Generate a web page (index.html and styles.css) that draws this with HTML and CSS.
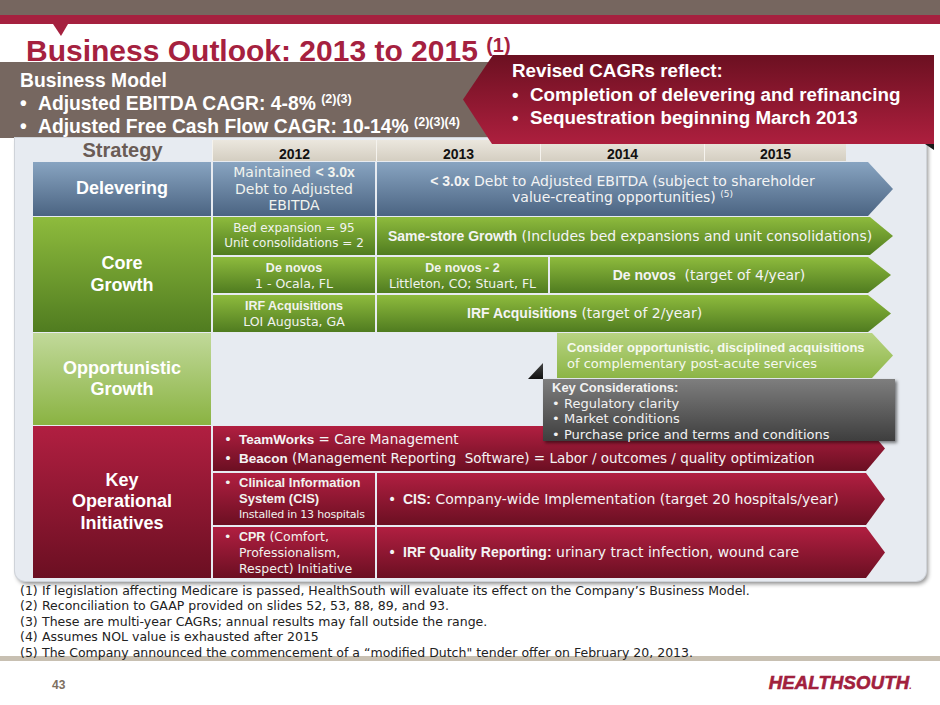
FILE: index.html
```html
<!DOCTYPE html>
<html>
<head>
<meta charset="utf-8">
<title>Business Outlook: 2013 to 2015</title>
<link rel="stylesheet" href="styles.css">
</head>
<body>
<div class="slide">
  <div class="topbar"></div>
  <div class="redline"></div>
  <h1 class="title">Business Outlook: 2013 to 2015 <span class="tsup">(1)</span></h1>

  <div class="banner">
    <div class="model">
      <div>Business Model</div>
      <div class="mli"><span class="dot">•</span><span>Adjusted EBITDA CAGR: 4-8% <sup>(2)(3)</sup></span></div>
      <div class="mli"><span class="dot">•</span><span>Adjusted Free Cash Flow CAGR: 10-14% <sup>(2)(3)(4)</sup></span></div>
    </div>
    <div class="revised">
      <div class="rev-shape">
        <div>Revised CAGRs reflect:</div>
        <div class="mli"><span class="dot">•</span><span>Completion of delevering and refinancing</span></div>
        <div class="mli"><span class="dot">•</span><span>Sequestration beginning March 2013</span></div>
      </div>
      <div class="rev-shadow"></div>
    </div>
  </div>

  <div class="panel">
    <div class="hdr">
      <div class="strategy">Strategy</div>
      <div class="yr y1">2012</div>
      <div class="yr y1">2013</div>
      <div class="yr y1">2014</div>
      <div class="yr y4">2015</div>
    </div>

    <div class="sect s-delev">
      <div class="label blue">Delevering</div>
      <div class="cell blue t14 lh165"><span>Maintained <b>&lt; 3.0x</b><br>Debt to Adjusted<br>EBITDA</span></div>
      <div class="arrow blue w516 h25 center t14 lh16"><span><b>&lt; 3.0x</b> Debt to Adjusted EBITDA (subject to shareholder<br>value-creating opportunities) <sup>(5)</sup></span></div>
    </div>

    <div class="sect s-core">
      <div class="label green">Core<br>Growth</div>
      <div class="rows">
        <div class="sub ra">
          <div class="cell green t12"><span>Bed expansion = 95<br>Unit consolidations = 2</span></div>
          <div class="arrow green w516 h23 t14 pl11"><span><b>Same-store Growth</b> (Includes bed expansions and unit consolidations)</span></div>
        </div>
        <div class="sub rb">
          <div class="cell green t125"><span><b>De novos</b><br>1 - Ocala, FL</span></div>
          <div class="cell green wide t125"><span><b>De novos - 2</b><br>Littleton, CO; Stuart, FL</span></div>
          <div class="arrow green w341 h23 center t14"><span><b>De novos</b>&nbsp; (target of 4/year)</span></div>
        </div>
        <div class="sub rc">
          <div class="cell green t125"><span><b>IRF Acquisitions</b><br>LOI Augusta, GA</span></div>
          <div class="arrow green w514 h23 t14 pl90"><span><b>IRF Acquisitions</b> (target of 2/year)</span></div>
        </div>
      </div>
    </div>

    <div class="sect s-opp">
      <div class="label lgreen">Opportunistic<br>Growth</div>
      <div class="opp-area">
        <div class="arrow lgarrow w336 h21 t13 pl10"><span><b>Consider opportunistic, disciplined acquisitions</b><br>of complementary post-acute services</span></div>
      </div>
    </div>

    <div class="sect s-key">
      <div class="label crim">Key<br>Operational<br>Initiatives</div>
      <div class="rows">
        <div class="sub r1">
          <div class="arrow crim w672 h19 t135 pl11">
            <div>
              <div class="bl"><span class="bd">•</span><span><b>TeamWorks</b> = Care Management</span></div>
              <div class="bl"><span class="bd">•</span><span><b>Beacon</b> (Management Reporting&nbsp; Software) = Labor / outcomes / quality optimization</span></div>
            </div>
          </div>
        </div>
        <div class="sub r2">
          <div class="cell crim left pl11">
            <div class="bl"><span class="bd">•</span><span><b class="b13">Clinical Information<br>System (CIS)</b><br><span class="small">Installed in 13 hospitals</span></span></div>
          </div>
          <div class="arrow crim w508 h19 t14 pl11">
            <div class="bl"><span class="bd">•</span><span><b>CIS:</b> Company-wide Implementation (target 20 hospitals/year)</span></div>
          </div>
        </div>
        <div class="sub r3">
          <div class="cell crim left pl11 t125 lh16">
            <div class="bl"><span class="bd">•</span><span><b>CPR</b> (Comfort,<br>Professionalism,<br>Respect) Initiative</span></div>
          </div>
          <div class="arrow crim w508 h19 t14 pl11">
            <div class="bl"><span class="bd">•</span><span><b>IRF Quality Reporting:</b> urinary tract infection, wound care</span></div>
          </div>
        </div>
      </div>
    </div>

    <div class="keycons">
      <div><b>Key Considerations:</b></div>
      <div class="bl"><span class="kd">•</span><span>Regulatory clarity</span></div>
      <div class="bl"><span class="kd">•</span><span>Market conditions</span></div>
      <div class="bl"><span class="kd">•</span><span>Purchase price and terms and conditions</span></div>
    </div>
  </div>

  <div class="notes">
    <div class="note"><span class="nn">(1)</span><span>If legislation affecting Medicare is passed, HealthSouth will evaluate its effect on the Company’s Business Model.</span></div>
    <div class="note"><span class="nn">(2)</span><span>Reconciliation to GAAP provided on slides 52, 53, 88, 89, and 93.</span></div>
    <div class="note"><span class="nn">(3)</span><span>These are multi-year CAGRs; annual results may fall outside the range.</span></div>
    <div class="note"><span class="nn">(4)</span><span>Assumes NOL value is exhausted after 2015</span></div>
    <div class="note"><span class="nn">(5)</span><span>The Company announced the commencement of a “modified Dutch" tender offer on February 20, 2013.</span></div>
  </div>
  <div class="rule"></div>

  <div class="footer">
    <span class="pgnum">43</span>
    <span class="logo">HEALTHSOUTH<span class="reg">.</span></span>
  </div>
</div>
</body>
</html>
```

FILE: styles.css
```css
* { box-sizing: border-box; }
html, body { margin: 0; padding: 0; background: #fff; }
body { font-family: "DejaVu Sans", "Noto Sans", sans-serif; color: #222; }
b { font-family: "Liberation Sans", Arial, sans-serif; font-weight: 700; }

.slide { width: 940px; height: 705px; overflow: hidden; position: relative; background: #fff; }

.topbar { height: 15px; background: #76665f; }
.redline { height: 9px; background: #a5213f; position: relative; }
.redline::after {
  content: ""; position: absolute; left: 53px; top: 9px;
  border-left: 8px solid transparent; border-right: 7px solid transparent;
  border-top: 12px solid #a5213f;
}

.title {
  margin: 0; height: 38px; padding: 6px 0 0 26px;
  font: 700 30px/31px "Liberation Sans", Arial, sans-serif;
  color: #a5213f; white-space: nowrap;
}
.tsup { font-size: 20px; vertical-align: 9px; }

/* banner */
.banner { position: relative; height: 76px; }
.model {
  width: 500px; height: 76px; background: #766760; color: #fff;
  padding: 7px 0 0 20px;
  font: 700 19.3px/23px "Liberation Sans", Arial, sans-serif;
}
.mli { display: flex; white-space: nowrap; }
.dot { width: 18px; flex: none; }
.model sup, .rev-shape sup { font-size: 12.5px; vertical-align: 7px; line-height: 0; }
.revised { position: absolute; left: 463px; top: -7px; width: 471px; height: 89px; z-index: 5; }
.rev-shape {
  height: 100%;
  clip-path: polygon(30px 0, 100% 0, 100% 100%, 29px 100%, 0 50%);
  background: linear-gradient(#6c1021, #ad1f3e);
  color: #fff; padding: 4px 0 0 49px;
  font: 700 18.8px/23.5px "Liberation Sans", Arial, sans-serif;
}
.rev-shadow {
  position: absolute; right: 0; top: 100%; width: 9px; height: 6px;
  background: #1a1a1a; clip-path: polygon(0 0, 100% 0, 100% 100%);
}

/* panel */
.panel {
  position: relative; margin-left: 15px; width: 911px; height: 443px;
  background: #e7ebf1; border-radius: 0 0 10px 10px;
  box-shadow: 0 0 0 1px #cfd3d9, 2px 3px 4px rgba(0,0,0,.45);
  padding: 2px 0 0 18px;
  display: flex; flex-direction: column; gap: 1px;
}
.hdr { display: flex; height: 21px; flex: none; }
.strategy {
  width: 179px; text-align: center; color: #6a5c56;
  font: 700 20px/21px "Liberation Sans", Arial, sans-serif;
}
.yr {
  background: linear-gradient(#ebe7de, #d4cec1);
  text-align: center; color: #111; padding-top: 6px;
  font: 700 14px/16px "Liberation Sans", Arial, sans-serif;
  border-left: 1px solid #f5f3ee;
}
.y1 { width: 164px; }
.y4 { width: 142px; }

.sect { display: flex; gap: 2px; flex: none; }
.s-delev { height: 54px; }
.s-core { height: 115px; }
.s-opp { height: 92px; }
.s-key { height: 152px; }

.label {
  width: 178px; flex: none; display: flex; align-items: center; justify-content: center;
  text-align: center; color: #fff;
  font: 700 18px/21.5px "Liberation Sans", Arial, sans-serif;
}
.rows { display: flex; flex-direction: column; gap: 2px; }
.sub { display: flex; gap: 2px; }
.ra { height: 38px; }
.rb { height: 36px; }
.rc { height: 37px; }
.r1 { height: 45px; }
.r2 { height: 52px; }
.r3 { height: 51px; }

.cell {
  flex: none; width: 162px; display: flex; align-items: center; justify-content: center;
  text-align: center; color: #f1f3ee; white-space: nowrap;
}
.cell.wide { width: 171px; }
.cell.left { justify-content: flex-start; text-align: left; }

.arrow {
  flex: none; display: flex; align-items: center; color: #f4f4f4; white-space: nowrap;
  clip-path: polygon(0 0, calc(100% - var(--h)) 0, 100% 50%, calc(100% - var(--h)) 100%, 0 100%);
  padding-right: var(--h);
}
.arrow.center { justify-content: center; text-align: center; }
.h25 { --h: 25px; }
.h23 { --h: 23px; }
.h21 { --h: 21px; }
.h19 { --h: 19px; }
.w516 { width: 516px; }
.w514 { width: 514px; }
.w341 { width: 341px; }
.w336 { width: 336px; height: 45px; }
.w672 { width: 672px; }
.w508 { width: 508px; }

.pl10 { padding-left: 10px; }
.pl11 { padding-left: 11px; }
.pl90 { padding-left: 90px; }

.t12 { font-size: 12px; line-height: 15px; }
.t125 { font-size: 12.5px; line-height: 15px; }
.t13 { font-size: 13px; line-height: 15.5px; }
.t135 { font-size: 13.5px; line-height: 18px; }
.t14 { font-size: 14px; line-height: 17px; }
.lh16 { line-height: 16px; }
.lh165 { line-height: 16.5px; }
.arrow sup { font-size: 9px; vertical-align: 5px; line-height: 0; }

.blue { background: linear-gradient(#88a4c1, #4b6482); }
.green { background: linear-gradient(#8ebb3d, #507c20); }
.lgreen { background: linear-gradient(#c1d99a, #8ab342); }
.lgarrow { background: linear-gradient(#b8d482, #8cb546); color: #f6f9ef; }
.crim { background: linear-gradient(#b11f41, #6b0f22); }

.opp-area { padding-left: 344px; }

.bl { display: flex; }
.bd { width: 15px; flex: none; }
.b13 { font-size: 13px; line-height: 15.5px; }
.r2 .cell { font-size: 13px; line-height: 15.5px; }
.small { font-size: 11px; letter-spacing: -0.2px; }

.keycons {
  position: absolute; left: 528px; top: 241px; width: 352px; height: 62px;
  background: linear-gradient(#7e7e7e, #3e3e3e); color: #f2f2f2;
  padding: 1px 0 0 9px; font-size: 13px; line-height: 15.5px;
  box-shadow: 2px 2px 3px rgba(0,0,0,.5);
}
.keycons::before {
  content: ""; position: absolute; left: -15px; top: -16px; width: 15px; height: 16px;
  background: linear-gradient(#444, #111);
  clip-path: polygon(0 100%, 100% 0, 100% 100%);
}
.kd { width: 12px; flex: none; }

/* notes */
.notes {
  position: relative; z-index: 1; margin: 2px 0 0 20px;
  font-size: 12.5px; line-height: 15.4px; color: #222;
}
.note { display: flex; white-space: nowrap; }
.nn { width: 22px; flex: none; }
.rule { height: 5px; margin-top: -4px; background: #c8c0b2; }

.footer {
  display: flex; align-items: baseline; padding: 12px 28px 0 52px;
}
.pgnum { font: 700 12px/14px "Liberation Sans", Arial, sans-serif; color: #7d6f5f; }
.logo {
  margin-left: auto; color: #a1203d;
  font: italic 700 18.5px/20px "Liberation Sans", Arial, sans-serif;
  -webkit-text-stroke: 0.6px #a1203d; letter-spacing: 0.2px;
}
.reg { font-size: 9px; -webkit-text-stroke: 0; }
```
